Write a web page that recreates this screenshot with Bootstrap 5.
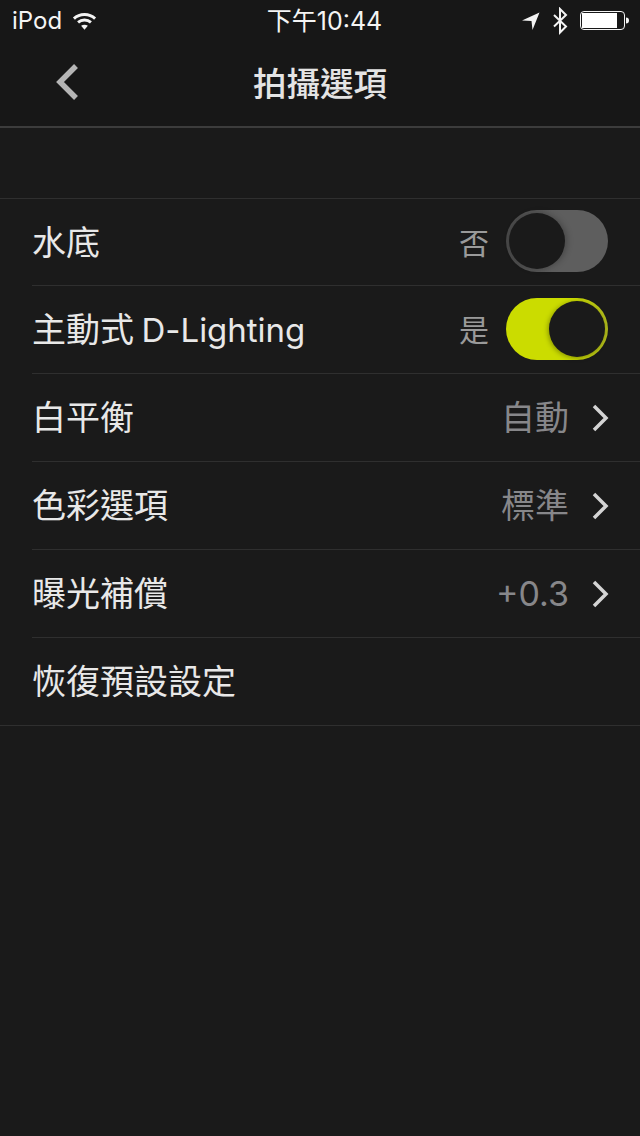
<!DOCTYPE html>
<html lang="zh-Hant">
<head>
<meta charset="utf-8">
<title>拍攝選項</title>
<link href="https://cdn.jsdelivr.net/npm/bootstrap@5.3.0/dist/css/bootstrap.min.css" rel="stylesheet">
<style>
html,body{height:100%}
body{background:#1a1a1a;color:#eee;font-family:"Inter","Noto Sans CJK TC",sans-serif;width:640px;height:1136px;overflow:hidden}
.stat-bar{height:40px;padding:2px 11px 0 12px;color:#f4f4f4;font-size:24px;background:#171717;line-height:1}
.stat-left{width:208px;gap:10px}
.stat-time{font-size:25px;font-weight:400}
.stat-right{width:200px;gap:12px}
.nav-head{height:88px;background:#171717;border-bottom:2px solid #3c3c3c;padding-top:3px}
.nav-title{font-size:33.5px;font-weight:500;color:#e4e4e4;line-height:1}
.back-btn{left:55px;top:23px}
.setting-list{margin-top:70px;--bs-list-group-bg:transparent;--bs-list-group-border-width:0;border-top:1px solid #2f2f2f;border-bottom:1px solid #2f2f2f;border-radius:0}
.setting-row{height:88px;padding:0 32px;background:transparent;color:#e8e8e8;font-size:34px;line-height:1;border:0;position:relative}
.setting-row+.setting-row::before{content:"";position:absolute;left:32px;right:0;top:-1px;height:1px;background:#2f2f2f}
.setting-row:first-child,.setting-row:last-child{height:87px}
.latin-text{font-size:33px;letter-spacing:-.03px}
.latin-wrap{word-spacing:-2px}
.setting-val{color:#87878a;font-size:34px}
.setting-val-sm{font-size:30px;margin-right:17px;color:#9a9a9a}
.chev{margin-left:22px;margin-right:-1px}
.tog{width:102px;height:62px;border-radius:31px;position:relative;flex:none}
.tog-off{background:linear-gradient(90deg,#474747,#5e5e5e 45%);margin-bottom:3px}
.tog-on{background:linear-gradient(90deg,#cbdc00 65%,#aeb81c);margin-bottom:2px}
.tog-knob{position:absolute;top:3px;width:56px;height:56px;border-radius:50%;background:#1a1a1a}
.tog-off .tog-knob{left:3px;box-shadow:2px 0 6px rgba(0,0,0,.25)}
.tog-on .tog-knob{left:43px;box-shadow:-1px 1px 5px rgba(0,0,0,.35)}
</style>
</head>
<body>
<div class="stat-bar d-flex align-items-center justify-content-between">
  <div class="stat-left d-flex align-items-center"><span>iPod</span>
    <svg width="25" height="20" viewBox="0 0 26 20"><g fill="none" stroke="#f4f4f4" stroke-width="3"><path d="M2 7.5C8 1.8 18 1.8 24 7.5"/><path d="M6.3 11.5C10 8.2 16 8.2 19.7 11.5"/></g><path d="M9.5 15C11.5 13.4 14.5 13.4 16.5 15L13 19z" fill="#f4f4f4"/></svg>
  </div>
  <div class="stat-time">下午10:44</div>
  <div class="stat-right d-flex align-items-center justify-content-end">
    <svg width="18" height="20" viewBox="0 0 18 20"><path d="M0 9.5L17.5 1.5L10.5 19L9.5 10z" fill="#f4f4f4"/></svg>
    <svg width="16" height="28" viewBox="0 0 16 28"><path d="M2 8L14 19.5L8 25.5V2L14 8L2 19.5" fill="none" stroke="#f4f4f4" stroke-width="2"/></svg>
    <svg width="49" height="20" viewBox="0 0 49 20"><rect x=".5" y=".5" width="44" height="18" rx="3.5" fill="none" stroke="#f4f4f4"/><rect x="2" y="2" width="35" height="15" fill="#fff"/><path d="M46 6.5c2 0 3 1 3 3s-1 3-3 3z" fill="#f4f4f4"/></svg>
  </div>
</div>
<div class="nav-head position-relative d-flex align-items-center justify-content-center">
  <svg class="back-btn position-absolute" width="26" height="38" viewBox="0 0 26 38"><path d="M21 3L5 19L21 35" fill="none" stroke="#b5b5b5" stroke-width="5.5"/></svg>
  <div class="nav-title">拍攝選項</div>
</div>
<div class="list-group setting-list">
  <div class="list-group-item setting-row d-flex align-items-center justify-content-between"><span>水底</span>
    <div class="d-flex align-items-center"><span class="setting-val-sm">否</span><div class="tog tog-off"><div class="tog-knob"></div></div></div></div>
  <div class="list-group-item setting-row d-flex align-items-center justify-content-between"><span class="latin-wrap">主動式 <span class="latin-text">D-Lighting</span></span>
    <div class="d-flex align-items-center"><span class="setting-val-sm">是</span><div class="tog tog-on"><div class="tog-knob"></div></div></div></div>
  <div class="list-group-item setting-row d-flex align-items-center justify-content-between"><span>白平衡</span>
    <div class="d-flex align-items-center"><span class="setting-val">自動</span><svg class="chev" width="18" height="30" viewBox="0 0 18 30"><path d="M3 3L15 15L3 27" fill="none" stroke="#d4d4d4" stroke-width="3.5"/></svg></div></div>
  <div class="list-group-item setting-row d-flex align-items-center justify-content-between"><span>色彩選項</span>
    <div class="d-flex align-items-center"><span class="setting-val">標準</span><svg class="chev" width="18" height="30" viewBox="0 0 18 30"><path d="M3 3L15 15L3 27" fill="none" stroke="#d4d4d4" stroke-width="3.5"/></svg></div></div>
  <div class="list-group-item setting-row d-flex align-items-center justify-content-between"><span>曝光補償</span>
    <div class="d-flex align-items-center"><span class="setting-val">+0.3</span><svg class="chev" width="18" height="30" viewBox="0 0 18 30"><path d="M3 3L15 15L3 27" fill="none" stroke="#d4d4d4" stroke-width="3.5"/></svg></div></div>
  <div class="list-group-item setting-row d-flex align-items-center justify-content-between"><span>恢復預設設定</span></div>
</div>
<script src="https://cdn.jsdelivr.net/npm/bootstrap@5.3.0/dist/js/bootstrap.bundle.min.js"></script>
</body>
</html>
